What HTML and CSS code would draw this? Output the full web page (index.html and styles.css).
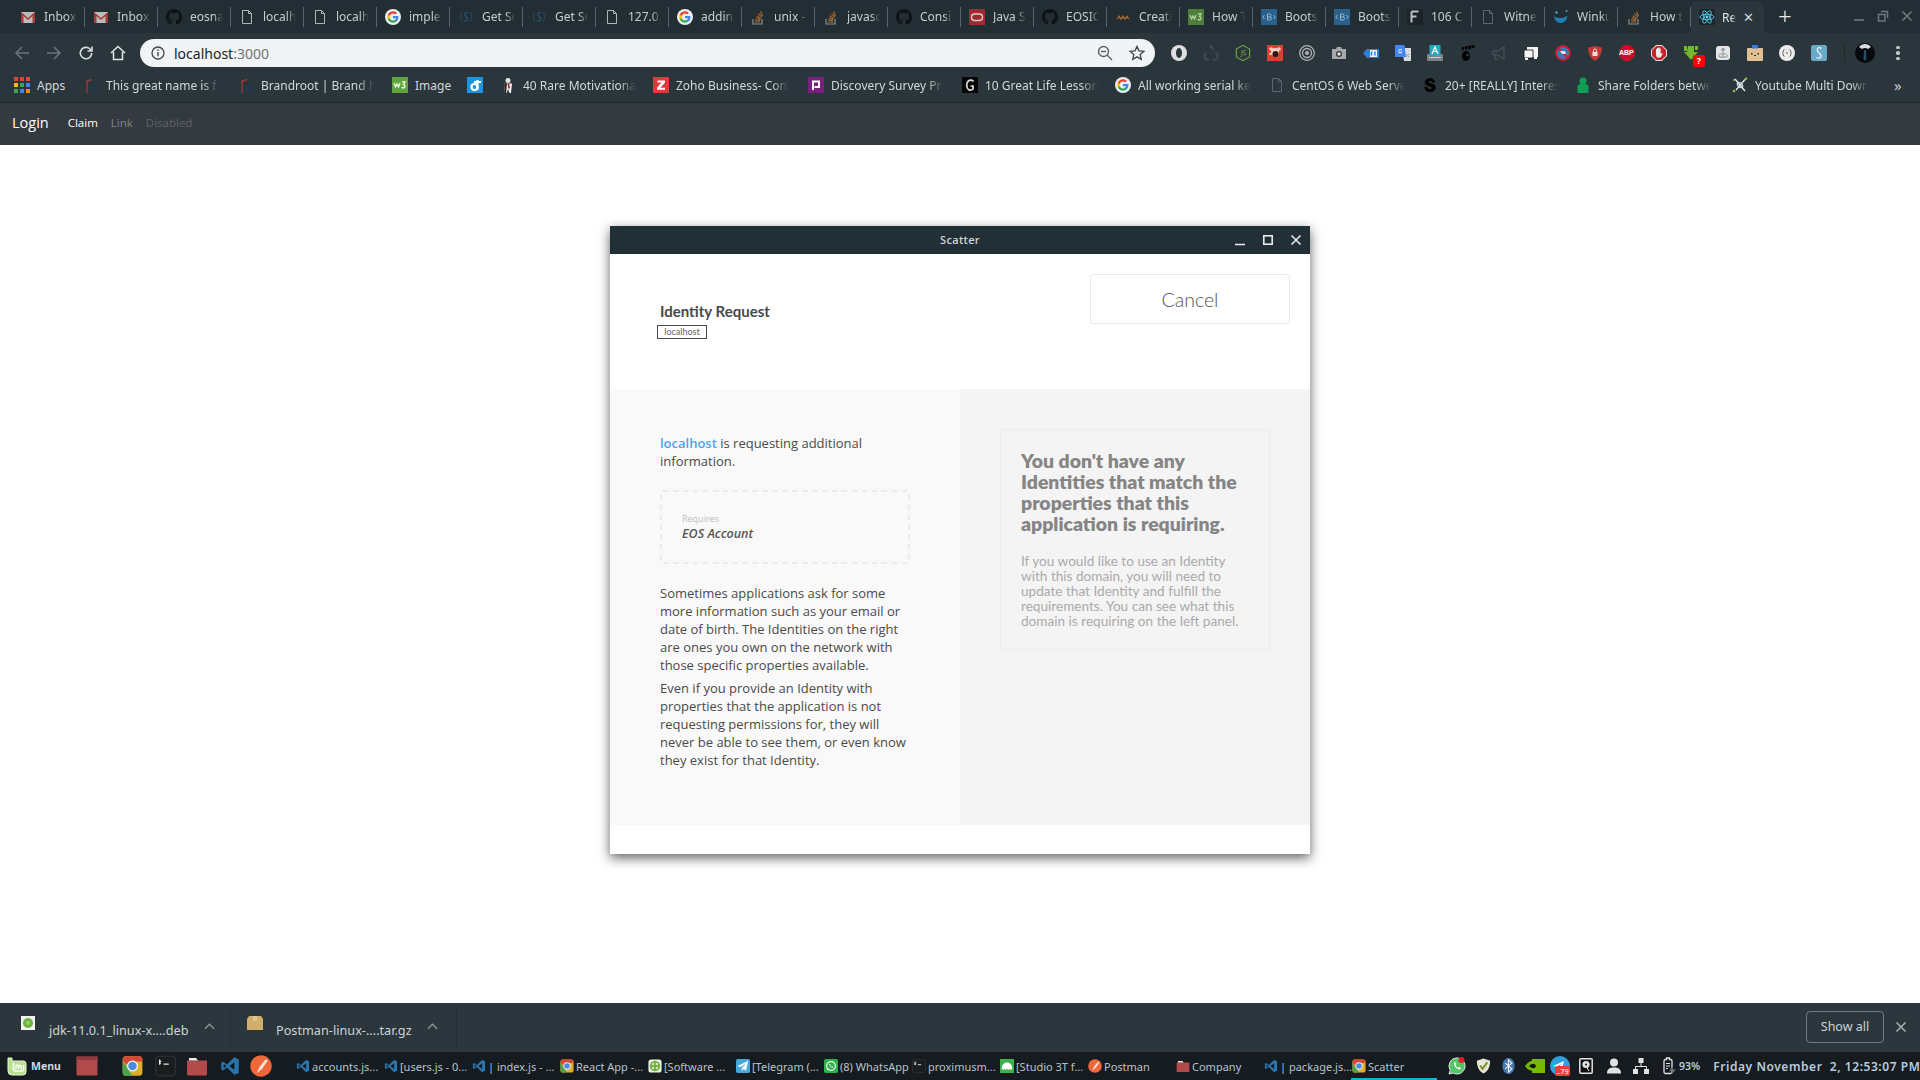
FILE: index.html
```
<!DOCTYPE html>
<html lang="en">
<head>
<meta charset="utf-8">
<title>React App</title>
<link rel="stylesheet" href="styles.css">
</head>
<body>
<svg class="defs" aria-hidden="true">
  <symbol id="gmail" viewBox="0 0 16 16"><rect x="1" y="3" width="14" height="11" fill="#b9bdbf"/><path d="M1 3l7 6 7-6v11h-2.500V7L8 11 3.500 7v7H1z" fill="#a63a34"/></symbol>
  <symbol id="github" viewBox="0 0 16 16"><path fill="#0e1316" d="M8 0C3.580 0 0 3.580 0 8c0 3.540 2.290 6.530 5.470 7.590.400.070.550-.170.550-.380 0-.190-.010-.820-.010-1.490-2.010.370-2.530-.490-2.690-.940-.090-.230-.480-.940-.820-1.130-.280-.150-.680-.520-.010-.530.630-.010 1.080.580 1.230.820.720 1.210 1.870.870 2.330.660.070-.520.280-.870.510-1.070-1.780-.200-3.640-.890-3.640-3.950 0-.870.310-1.590.820-2.150-.080-.200-.360-1.020.080-2.120 0 0 .670-.210 2.200.820.640-.180 1.320-.270 2-.270.680 0 1.360.090 2 .270 1.530-1.040 2.200-.820 2.200-.820.440 1.100.160 1.920.080 2.120.510.560.820 1.270.820 2.150 0 3.070-1.870 3.750-3.650 3.950.290.250.540.730.540 1.480 0 1.070-.010 1.930-.010 2.200 0 .210.150.460.550.380A8.013 8.013 0 0016 8c0-4.420-3.580-8-8-8z"/></symbol>
  <symbol id="page" viewBox="0 0 16 16"><path d="M3.500 1.500h6l3 3v10h-9z M9.500 1.500v3h3" fill="none" stroke="#aeb6ba" stroke-width="1"/></symbol>
  <symbol id="pagedim" viewBox="0 0 16 16"><path d="M3.500 1.500h6l3 3v10h-9z M9.500 1.500v3h3" fill="none" stroke="#5e696f" stroke-width="1"/></symbol>
  <symbol id="google" viewBox="0 0 24 24"><circle cx="12" cy="12" r="12" fill="#eceff0"/><g transform="translate(2.600 2.600) scale(.78)"><path fill="#4285F4" d="M22.560 12.250c0-.780-.070-1.530-.200-2.250H12v4.260h5.920c-.260 1.370-1.040 2.530-2.210 3.310v2.770h3.570c2.080-1.920 3.280-4.740 3.280-8.090z"/><path fill="#34A853" d="M12 23c2.970 0 5.460-.980 7.280-2.660l-3.570-2.770c-.980.660-2.230 1.060-3.710 1.060-2.860 0-5.290-1.930-6.160-4.530H2.180v2.840C3.990 20.530 7.700 23 12 23z"/><path fill="#FBBC05" d="M5.840 14.090c-.220-.660-.350-1.360-.350-2.090s.130-1.430.350-2.090V7.070H2.180C1.430 8.550 1 10.220 1 12s.430 3.450 1.180 4.930l3.660-2.840z"/><path fill="#EA4335" d="M12 5.380c1.620 0 3.060.560 4.210 1.640l3.150-3.150C17.450 2.090 14.970 1 12 1 7.700 1 3.990 3.470 2.180 7.070l3.660 2.840c.870-2.600 3.300-4.530 6.160-4.530z"/></g></symbol>
  <symbol id="scatter" viewBox="0 0 16 16"><path d="M10 4C8 2.500 6 4 7 6c1 2 3 2.500 2.500 4.800-.4 1.600-2.300 1.700-3.500.8" fill="none" stroke="#27526f" stroke-width="1.300"/><path d="M4 3C2 5 2 10 4 13M12 3c2 2 2 7 0 10" fill="none" stroke="#27526f" stroke-width=".8"/></symbol>
  <symbol id="so" viewBox="0 0 16 16"><path d="M3 10v5h9v-5" fill="none" stroke="#8b8f90" stroke-width="1.200"/><path d="M5 13h5M5 11l5 .6M5.600 9l4.800 1.400M6.600 6.800l4.300 2.600M8.400 4.600l3.500 3.600M10.500 2.500l2 4.500" stroke="#a8682d" stroke-width="1.200"/></symbol>
  <symbol id="oracle" viewBox="0 0 16 16"><rect width="16" height="16" fill="#9c2b32"/><rect x="2.500" y="5" width="11" height="6.500" rx="3.200" fill="none" stroke="#e7c9c9" stroke-width="1.400"/></symbol>
  <symbol id="creati" viewBox="0 0 16 16"><path d="M1 11l3-5 2 3 2-3 2 3 2-3 3 5-3-2-2 2-2-2-2 2-2-2z" fill="#a66a2c"/></symbol>
  <symbol id="w3" viewBox="0 0 16 16"><rect width="16" height="16" fill="#60a53e"/><path d="M2 6l1.500 4 1.500-3 1.500 3L8 6M10 5h3l-1.500 2.500c2 0 2 3.500-.2 3.500-.8 0-1.300-.3-1.600-.8" fill="none" stroke="#f2f8ee" stroke-width="1.300"/></symbol>
  <symbol id="w3dim" viewBox="0 0 16 16"><rect width="16" height="16" fill="#4d7f38"/><path d="M2 6l1.500 4 1.500-3 1.500 3L8 6M10 5h3l-1.500 2.500c2 0 2 3.500-.2 3.500-.8 0-1.300-.3-1.600-.8" fill="none" stroke="#b9d0ac" stroke-width="1.300"/></symbol>
  <symbol id="boot" viewBox="0 0 16 16"><rect width="16" height="16" fill="#2a618c"/><path d="M3.500 6L1.800 8l1.700 2M12.500 6l1.700 2-1.700 2M6.500 5v6M6.500 5H9c1.500 0 1.500 3 0 3H6.500m2.500 0c2 0 2 3 0 3H6.500" fill="none" stroke="#93b6d0" stroke-width="1"/></symbol>
  <symbol id="ff" viewBox="0 0 16 16"><rect width="16" height="16" fill="#1d2428"/><path d="M4.500 2.500h7M4.500 2.500v11M4.500 7.500h5" fill="none" stroke="#b9c0c4" stroke-width="2"/></symbol>
  <symbol id="winku" viewBox="0 0 16 16"><path d="M1 7c1 1 1 1 2.500 1.500 3 1 7 1 11-2-.5 5-3.500 7.500-7 7.500S1.500 11 1 7z" fill="#1f7fb4"/><circle cx="3.500" cy="3.500" r="1.200" fill="#4aa6d8"/><circle cx="13.500" cy="2" r="1" fill="#4aa6d8"/></symbol>
  <symbol id="react" viewBox="0 0 16 16"><rect width="16" height="16" rx="2" fill="#1c2529"/><g fill="none" stroke="#61dafb" stroke-width=".8"><ellipse cx="8" cy="8" rx="7" ry="2.700"/><ellipse cx="8" cy="8" rx="7" ry="2.700" transform="rotate(60 8 8)"/><ellipse cx="8" cy="8" rx="7" ry="2.700" transform="rotate(120 8 8)"/></g><circle cx="8" cy="8" r="1.400" fill="#61dafb"/></symbol>
  <symbol id="appsgrid" viewBox="0 0 16 16"><g fill="#ea4335"><rect x="0" y="0" width="4" height="4"/><rect x="6" y="0" width="4" height="4"/><rect x="12" y="0" width="4" height="4"/></g><g fill="#fbbc05"><rect x="0" y="6" width="4" height="4"/></g><g fill="#34a853"><rect x="6" y="6" width="4" height="4"/></g><g fill="#4285f4"><rect x="12" y="6" width="4" height="4"/></g><g fill="#34a853"><rect x="0" y="12" width="4" height="4"/></g><g fill="#4285f4"><rect x="6" y="12" width="4" height="4"/></g><g fill="#fb8c00"><rect x="12" y="12" width="4" height="4"/></g></symbol>
  <symbol id="brand" viewBox="0 0 16 16"><path d="M4 3v13" stroke="#a63a3a" stroke-width="1.200"/><path d="M4 6c1-2.500 3-3.500 5-3" fill="none" stroke="#a63a3a" stroke-width="1.200"/><path d="M10 7v8" stroke="#1f3c55" stroke-width="1.200"/><circle cx="12" cy="12" r="2.500" fill="none" stroke="#1f3c55" stroke-width="1.200"/></symbol>
  <symbol id="dbm" viewBox="0 0 16 16"><rect width="16" height="16" fill="#1b95e0"/><circle cx="7.500" cy="10" r="3" fill="none" stroke="#fff" stroke-width="2.200"/><path d="M10.500 3v10M7 5h7" stroke="#fff" stroke-width="2.200"/></symbol>
  <symbol id="rare" viewBox="0 0 16 16"><rect width="16" height="16" fill="#2a353c"/><circle cx="8" cy="3.500" r="2.500" fill="#e4e4e4"/><path d="M4 6.500h8L11 16H9.500L8 12l-1.500 4H5z" fill="#f2f2f2"/><path d="M7.500 6.500h1.500L10 11l-1.500 1z" fill="#9b1f1f"/><path d="M4 6.500h3L6 16H5z" fill="#222"/></symbol>
  <symbol id="zoho" viewBox="0 0 16 16"><rect width="16" height="16" fill="#e8373a"/><path d="M4.500 3.500h7.500v2L7.500 10.800H12v2H4v-2l4.500-5.300h-4z" fill="#fff"/></symbol>
  <symbol id="disc" viewBox="0 0 16 16"><rect width="16" height="16" fill="#7b1f7e"/><path d="M5 13V4.500h6v5.500H6.500" fill="none" stroke="#fff" stroke-width="2"/></symbol>
  <symbol id="great" viewBox="0 0 16 16"><rect width="16" height="16" fill="#060606"/><path d="M11.500 4.500C10.500 3 8 2.500 6.300 4 4 6 4.300 11 6.500 12.500c1.500 1 3.500.5 4.500-.5V9H8.500" fill="none" stroke="#dcdcdc" stroke-width="1.700"/></symbol>
  <symbol id="sblack" viewBox="0 0 16 16"><path d="M12.800 5.300C12.500 3 10.500 1.500 8 1.500 5 1.500 3.200 3 3.200 5.200c0 5 7 2.800 7 5.800 0 1-1 1.500-2.300 1.500-1.600 0-2.700-.800-2.900-2.300H2.800c.2 3 2.300 4.500 5.200 4.500 3.300 0 5.300-1.600 5.300-4 0-5.200-7-3-7-5.700 0-.9.800-1.400 1.800-1.400 1.300 0 2.200.600 2.400 1.700z" fill="#000" stroke="#000" stroke-width=".6"/></symbol>
  <symbol id="share" viewBox="0 0 16 16"><circle cx="8" cy="4" r="3.500" fill="#0f9d58"/><path d="M2.500 16V9.500C2.500 8 4 7 5.500 7h5c1.500 0 3 1 3 2.500V16z" fill="#0f9d58"/></symbol>
  <symbol id="yt" viewBox="0 0 16 16"><path d="M3 2l10 12M13 2.500L4 13" stroke="#dfe7ea" stroke-width="1.400"/><ellipse cx="8" cy="8" rx="3.200" ry="2" fill="none" stroke="#dfe7ea" transform="rotate(45 8 8)"/><circle cx="14" cy="1.800" r="1.300" fill="#8bc34a"/><circle cx="2" cy="14" r="1.300" fill="#8bc34a"/><circle cx="2" cy="3" r="1" fill="#8bc34a"/></symbol>
  <symbol id="vscode" viewBox="0 0 16 16"><path d="M11.500 1L5.500 6.800 2.500 4.500 1 5.300v5.400l1.500.8 3-2.300 6 5.800 3.500-1.500V2.500z" fill="#2a74ae"/><path d="M11.500 5v6l-4-3z" fill="#10181d"/><path d="M3 6.300v3.400L5 8z" fill="#10181d"/></symbol>
  <symbol id="chrome" viewBox="0 0 16 16"><rect x=".5" y=".5" width="15" height="15" rx="2.500" fill="#ddb02c"/><path d="M3 .5h10A2.500 2.500 0 0115.500 3v1.500H8L3.500 7 .5 4V3A2.500 2.500 0 013 .5z" fill="#d4483a"/><path d="M.5 4L5 11l3 4.500H3A2.500 2.500 0 01.5 13z" fill="#4fa04f"/><circle cx="8" cy="8" r="4.200" fill="#f2f2f2"/><circle cx="8" cy="8" r="3.200" fill="#4a8bdc"/></symbol>
  <symbol id="terminal" viewBox="0 0 16 16"><rect x=".5" y=".5" width="15" height="15" rx="2.500" fill="#1a1c1e" stroke="#3b3f42" stroke-width=".6"/><path d="M3.500 3v4M3 4.500h1.800M3 6h1.500M6.500 6.500h4" stroke="#e9e9e9" stroke-width="1"/></symbol>
  <symbol id="postman" viewBox="0 0 16 16"><circle cx="8" cy="8" r="7.800" fill="#f0683a"/><path d="M11.500 3L7 8.500 5 13l3.800-3L13 4z" fill="#fbe7dd"/></symbol>
  <symbol id="redbox" viewBox="0 0 22 20"><rect x=".5" y=".5" width="21" height="19" rx="1" fill="#b24a4c"/><rect x=".5" y=".5" width="21" height="3.500" fill="#8d3a3c"/></symbol>
  <symbol id="folder" viewBox="0 0 22 20"><path d="M1 4.500h20v14a1 1 0 01-1 1H2a1 1 0 01-1-1z" fill="#b24a4c"/><path d="M3 2h7l2 2.500H3z" fill="#f1f1f1"/></symbol>
  <symbol id="mint" viewBox="0 0 20 20"><path d="M1 2h4v3h11.500A2.500 2.500 0 0119 7.500V16a3 3 0 01-3 3H5a4 4 0 01-4-4z" fill="#b9e08e" stroke="#e8f5da"/><path d="M6.500 7v6a2 2 0 002 2H15a1.500 1.500 0 001.500-1.500V9" fill="none" stroke="#fff" stroke-width="1.500"/><path d="M9 13V9.500M11.500 13V9.500M14 13V9.500M8.500 9.500h5.500" stroke="#fff" stroke-width="1.300" fill="none"/></symbol>
  <symbol id="softw" viewBox="0 0 16 16"><rect x=".5" y=".5" width="15" height="15" rx="3" fill="#eef0e6"/><circle cx="8" cy="8" r="6" fill="#76b33f"/><g fill="#eef0e6"><circle cx="5.800" cy="5.800" r="1.200"/><circle cx="10.200" cy="5.800" r="1.200"/><circle cx="5.800" cy="10.200" r="1.200"/><circle cx="10.200" cy="10.200" r="1.200"/></g></symbol>
  <symbol id="telegram" viewBox="0 0 16 16"><rect width="16" height="16" rx="2" fill="#45a8dc"/><path d="M14 2L1.500 8l3.500 1.500L11.500 5 6.500 10.500V14l2.200-2.500 2.800 2z" fill="#f2f9fc"/></symbol>
  <symbol id="whatsapp" viewBox="0 0 16 16"><rect width="16" height="16" rx="2" fill="#29b14c"/><circle cx="8" cy="8" r="5" fill="none" stroke="#fff" stroke-width="1.300"/><path d="M3 13l1.200-3 1.800 2z" fill="#fff"/><path d="M6 5.800c0 2.400 1.800 4.200 4.200 4.200.5-.9 0-1.300-1-1.600l-.7.500C7.800 8.500 7.500 8.200 7.100 7.500l.5-.7C7.300 5.800 6.900 5.300 6 5.800z" fill="#fff"/></symbol>
  <symbol id="studio" viewBox="0 0 16 16"><rect width="16" height="16" fill="#3bb34a"/><path d="M2 11C2 7 4.500 4 8 4s6 3 6 7l-1.500 1.500-1.500-1.500-1.500 1.500L8 11l-1.500 1.500L5 11l-1.500 1.500z" fill="#fff"/></symbol>
  <symbol id="ext-o" viewBox="0 0 16 16"><circle cx="8" cy="8" r="8" fill="#dedede"/><ellipse cx="8" cy="8" rx="3" ry="5" fill="#2a353c"/></symbol>
  <symbol id="ext-rec" viewBox="0 0 16 16"><path d="M6.500 2.500L8 1l2.500 3.500M13 7l2 4-2 3.500H10M6 14.500H2.500L1 11l2-3.500" fill="none" stroke="#3f4c54" stroke-width="1.800"/></symbol>
  <symbol id="ext-node" viewBox="0 0 16 16"><path d="M8 .3l6.600 3.800v7.800L8 15.700 1.400 11.900V4.100z" fill="none" stroke="#6da13f" stroke-width="1.200"/><path d="M7 5v5.500c0 1-1 1.300-1.800.8M11 6c-.6-1-3-1-3 .500S11 7.500 11 9s-2.500 1.500-3 .3" fill="none" stroke="#6da13f" stroke-width=".9"/></symbol>
  <symbol id="ext-bug" viewBox="0 0 16 16"><rect width="16" height="16" fill="#d8412f"/><circle cx="8" cy="7" r="4" fill="#f4cfc8"/><circle cx="4" cy="4" r="1.800" fill="#f4cfc8"/><circle cx="12" cy="4" r="1.800" fill="#f4cfc8"/><circle cx="8.500" cy="9" r="3" fill="#2b1714"/><circle cx="3.500" cy="9" r="1.300" fill="#f4cfc8"/></symbol>
  <symbol id="ext-ring" viewBox="0 0 16 16"><g fill="none" stroke="#b0b4b6"><circle cx="8" cy="8" r="7.300" stroke-width="1.300"/><circle cx="8" cy="8" r="4.500" stroke-width="1.300"/></g><circle cx="8" cy="8" r="2" fill="#b0b4b6"/></symbol>
  <symbol id="ext-cam" viewBox="0 0 16 16"><path d="M1 4h4l1-2h4l1 2h4v10H1z" fill="#a6a9ab"/><circle cx="8" cy="9" r="3" fill="#2a353c"/><circle cx="8" cy="9" r="1.700" fill="#e5e5e5"/></symbol>
  <symbol id="ext-tag" viewBox="0 0 16 16"><path d="M0 8l4-4h12v9H4z" fill="#2f7de0"/><rect x="7" y="5" width="7" height="7" fill="#e9f1fc"/><path d="M8.500 6.500v4M12 6.500v4" stroke="#2f7de0" stroke-width="1.400"/></symbol>
  <symbol id="ext-gt" viewBox="0 0 16 16"><path d="M7 3h9v13H9z" fill="#d9dde0"/><path d="M0 0h9.500l1.500 12H0z" fill="#4285f4"/><path d="M7 5.200c-.5-1-3.500-1-3.500 1.100s3 2.300 3.500.7H5.500" fill="none" stroke="#fff" stroke-width=".9"/><path d="M11 9l3 3M14 9l-3 3" stroke="#8b9499"/></symbol>
  <symbol id="ext-kb" viewBox="0 0 16 16"><rect x="0" y="9" width="16" height="7" rx="1" fill="#7b8185"/><rect x="2.500" y="0" width="11" height="11" fill="#22a8c2"/><path d="M5 9L8 2l3 7M6 6.500h4" fill="none" stroke="#fff" stroke-width="1.200"/><path d="M2 12.500h12" stroke="#cfd3d5"/></symbol>
  <symbol id="ext-gnome" viewBox="0 0 16 16"><ellipse cx="7" cy="11" rx="4" ry="5" fill="#000"/><ellipse cx="4" cy="3.500" rx="1.200" ry="1.800" fill="#000"/><ellipse cx="7.200" cy="2.800" rx="1.300" ry="2" fill="#000"/><ellipse cx="10.500" cy="2.500" rx="1.500" ry="2.200" fill="#000"/><ellipse cx="14" cy="1.500" rx="1.700" ry="1.500" fill="#000"/><circle cx="8.500" cy="10" r="1.500" fill="#2a353c"/></symbol>
  <symbol id="ext-mega" viewBox="0 0 16 16"><path d="M2 6h5l6-4v12L7 10H2zM4 10v4h2.500" fill="none" stroke="#454f55" stroke-width="1.300"/></symbol>
  <symbol id="ext-mon" viewBox="0 0 16 16"><path d="M4 2h11v10H4z" fill="#f4f4f4"/><path d="M1 5h9v8H1z" fill="#f4f4f4" stroke="#111" stroke-width=".8"/><rect x="2" y="13" width="3" height="2" fill="#f4f4f4"/><rect x="11" y="12" width="3" height="2" fill="#f4f4f4"/></symbol>
  <symbol id="ext-no" viewBox="0 0 16 16"><circle cx="8" cy="8" r="7" fill="#3c78b8" stroke="#d21c2c" stroke-width="1.800"/><path d="M3 3l10 10" stroke="#d21c2c" stroke-width="1.800"/><path d="M5 6h5l1 3H7z" fill="#dfe6ef"/></symbol>
  <symbol id="ext-shield" viewBox="0 0 16 16"><path d="M1 2.500L8 1l7 1.500c0 6-2.500 10.500-7 13.500C3.500 13 1 8.500 1 2.500z" fill="#c13a36"/><rect x="5.500" y="7" width="5" height="4" fill="#f5dede"/><path d="M6.500 7V5.500a1.500 1.500 0 013 0V7" fill="none" stroke="#f5dede"/></symbol>
  <symbol id="ext-abp" viewBox="0 0 16 16"><path d="M5 0h6l5 5v6l-5 5H5l-5-5V5z" fill="#c70d2c"/></symbol>
  <symbol id="ext-stop" viewBox="0 0 16 16"><path d="M5 0h6l5 5v6l-5 5H5l-5-5V5z" fill="#e3e3e3"/><path d="M5.300 1h5.400L15 5.300v5.400L10.700 15H5.300L1 10.700V5.300z" fill="#c9222b"/><path d="M5 7V4h1v3-4h1.200v4-4.500h1.300V7 3.500h1.200V9l1.300-1 .7.500-2 4H6L5 10z" fill="#ececec"/></symbol>
  <symbol id="ext-dl" viewBox="0 0 16 16"><path d="M1 1h3v5H1zM5 1h6v6h4l-7 8-7-8h3z" fill="#74b62e"/><path d="M12 1h3v4h-3z" fill="#74b62e"/></symbol>
  <symbol id="ext-anchor" viewBox="0 0 16 16"><rect x="1" y="1" width="14" height="14" rx="3" fill="#e4e6e7"/><circle cx="8" cy="4.500" r="1.800" fill="#9aa0a3"/><path d="M8 6v7M4 9h8M3.500 10c0 3 9 3 9 0" fill="none" stroke="#9aa0a3" stroke-width="1.200"/></symbol>
  <symbol id="ext-box" viewBox="0 0 16 16"><rect y="3" width="16" height="13" rx="1" fill="#e3bf94"/><rect x="5" y="0" width="6" height="3.500" fill="#2f7de0"/><g fill="#2a2a2a"><rect x="4" y="8" width="1.500" height="1.500"/><rect x="10.500" y="8" width="1.500" height="1.500"/><rect x="7" y="10" width="2" height="1"/></g></symbol>
  <symbol id="ext-json" viewBox="0 0 16 16"><circle cx="8" cy="8" r="8" fill="#ececec"/><path d="M5.500 4.500C4 4.500 4.500 7.500 3.500 8c1 .5.500 3.500 2 3.500M10.500 4.500c1.500 0 1 3 2 3.500-1 .5-.5 3.500-2 3.500M7 8h2" fill="none" stroke="#444" stroke-width=".8"/></symbol>
  <symbol id="ext-s" viewBox="0 0 16 16"><rect width="16" height="16" rx="2" fill="#68aac8"/><path d="M10.500 3.500C8 1.500 5.500 3.500 6.500 6c1 2 4 3 3.500 5.500-.5 2-3 2-4.500 1" fill="none" stroke="#eaf4f8" stroke-width="1.300"/></symbol>
  <symbol id="avatar" viewBox="0 0 20 20"><circle cx="10" cy="10" r="10" fill="#060a10"/><path d="M4 4c3-4 9-4 12 0l-3 2c-2-1.500-4-1.500-6 0z" fill="#d8dde2"/><path d="M9 7h2l.5 9-1.500 2-1.500-2z" fill="#2a4a66"/></symbol>
  <symbol id="tray-wa" viewBox="0 0 18 18"><path d="M9 1a8 8 0 00-6.800 12.200L1 17l4-1.100A8 8 0 109 1z" fill="#54c566" stroke="#e6e6e6"/><path d="M6 5.500c-1 3 3.500 7.800 6.500 6.800.8-1.200.3-1.800-1.200-2.300l-1 .8C9 10.300 8 9.300 7.500 8l.8-1C7.900 5.500 7.200 4.900 6 5.500z" fill="#fff"/><circle cx="13.500" cy="3" r="3" fill="#e51b23"/></symbol>
  <symbol id="tray-shield" viewBox="0 0 18 18"><path d="M9 1l7 2.500c0 7-2.500 11-7 13.500-4.500-2.500-7-6.500-7-13.500z" fill="#e9e5d8"/><path d="M5.500 8.500L8 12l5-7" fill="none" stroke="#6f8f2a" stroke-width="2"/></symbol>
  <symbol id="tray-bt" viewBox="0 0 18 18"><ellipse cx="9" cy="9" rx="6.500" ry="8.500" fill="#4a76b4"/><path d="M5.500 6l7 6-3.500 3.500V2.500L12.500 6l-7 6" fill="none" stroke="#eef2f8" stroke-width="1.200"/></symbol>
  <symbol id="tray-nv" viewBox="0 0 20 14"><rect x="7" y="0" width="13" height="14" fill="#76b900"/><path d="M0 7c4-6 11-7 13-4v8C9 13 3 12 0 7z" fill="#76b900"/><path d="M4 7c3-3 6-3 7 0-1 3-4 3-7 0z" fill="#10171b"/></symbol>
  <symbol id="tray-tg" viewBox="0 0 20 20"><circle cx="10" cy="10" r="10" fill="#2f9fdd"/><path d="M14 5L3 10l3 1 5-3-3 4 4 1z" fill="#f3fafd"/></symbol>
  <symbol id="tray-disk" viewBox="0 0 14 16"><rect x=".8" y=".8" width="12.400" height="14.400" rx="1" fill="#111" stroke="#dfe3e6" stroke-width="1.500"/><circle cx="7" cy="6.500" r="3.600" fill="#dfe3e6"/><circle cx="7" cy="6.500" r="1" fill="#111"/><path d="M7 8l3 5" stroke="#dfe3e6"/></symbol>
  <symbol id="tray-user" viewBox="0 0 14 16"><circle cx="7" cy="4.500" r="4" fill="#dfe3e6"/><path d="M0 15.500c0-5 3-6 7-6s7 1 7 6z" fill="#dfe3e6"/></symbol>
  <symbol id="tray-net" viewBox="0 0 16 16"><g fill="#dfe3e6"><rect x="5.500" y="0" width="5" height="5"/><rect x="0" y="11" width="5" height="5"/><rect x="11" y="11" width="5" height="5"/></g><path d="M8 5v3.500M2.500 11V8.500h11V11" fill="none" stroke="#dfe3e6"/></symbol>
  <symbol id="tray-bat" viewBox="0 0 16 18"><path d="M4.500 2.500h1V1h3v1.500h1a1.500 1.500 0 011.500 1.500v11a1.500 1.500 0 01-1.500 1.500h-5.500A1.500 1.500 0 013 15V4a1.500 1.500 0 011.500-1.500z" fill="none" stroke="#dfe3e6" stroke-width="1.300"/><path d="M5 6.500h4M5 9h4M5 11.500h2" stroke="#dfe3e6"/><path d="M12 9l-4 5h3l-1 4 5-5.500h-3z" fill="#6b7277"/></symbol>
  <symbol id="tray-snd" viewBox="0 0 18 16"><path d="M1 5h3l5-4v14l-5-4H1z" fill="#e0e3e5"/><path d="M11 4.500c1.500 2 1.500 5 0 7M13.500 2.500c2.500 3 2.500 8 0 11" fill="none" stroke="#e0e3e5" stroke-width="1.300"/></symbol>
</svg>

<div class="tabstrip">
  <div class="tab"><svg class="fav"><use href="#gmail"/></svg><span class="tabtext">Inbox</span></div>
  <div class="tab"><svg class="fav"><use href="#gmail"/></svg><span class="tabtext">Inbox</span></div>
  <div class="tab"><svg class="fav"><use href="#github"/></svg><span class="tabtext">eosna</span></div>
  <div class="tab"><svg class="fav"><use href="#page"/></svg><span class="tabtext">localh</span></div>
  <div class="tab"><svg class="fav"><use href="#page"/></svg><span class="tabtext">localh</span></div>
  <div class="tab"><svg class="fav"><use href="#google"/></svg><span class="tabtext">imple</span></div>
  <div class="tab"><svg class="fav"><use href="#scatter"/></svg><span class="tabtext">Get Sc</span></div>
  <div class="tab"><svg class="fav"><use href="#scatter"/></svg><span class="tabtext">Get Sc</span></div>
  <div class="tab"><svg class="fav"><use href="#page"/></svg><span class="tabtext">127.0.</span></div>
  <div class="tab"><svg class="fav"><use href="#google"/></svg><span class="tabtext">addin</span></div>
  <div class="tab"><svg class="fav"><use href="#so"/></svg><span class="tabtext">unix -</span></div>
  <div class="tab"><svg class="fav"><use href="#so"/></svg><span class="tabtext">javasc</span></div>
  <div class="tab"><svg class="fav"><use href="#github"/></svg><span class="tabtext">Consi</span></div>
  <div class="tab"><svg class="fav"><use href="#oracle"/></svg><span class="tabtext">Java S</span></div>
  <div class="tab"><svg class="fav"><use href="#github"/></svg><span class="tabtext">EOSIC</span></div>
  <div class="tab"><svg class="fav"><use href="#creati"/></svg><span class="tabtext">Creati</span></div>
  <div class="tab"><svg class="fav"><use href="#w3dim"/></svg><span class="tabtext">How T</span></div>
  <div class="tab"><svg class="fav"><use href="#boot"/></svg><span class="tabtext">Boots</span></div>
  <div class="tab"><svg class="fav"><use href="#boot"/></svg><span class="tabtext">Boots</span></div>
  <div class="tab"><svg class="fav"><use href="#ff"/></svg><span class="tabtext">106 C</span></div>
  <div class="tab"><svg class="fav"><use href="#pagedim"/></svg><span class="tabtext">Witne</span></div>
  <div class="tab"><svg class="fav"><use href="#winku"/></svg><span class="tabtext">Winku</span></div>
  <div class="tab"><svg class="fav"><use href="#so"/></svg><span class="tabtext">How t</span></div>
  <div class="tab tab-active"><svg class="fav"><use href="#react"/></svg><span class="tabtext tabtext-active">Re</span><span class="tabx">✕</span></div>
  <span class="newtab">+</span>
  <div class="wincontrols">
    <svg class="winbtn" viewBox="0 0 12 12"><path d="M1 10h10" stroke="#6e787e" stroke-width="1.600"/></svg>
    <svg class="winbtn" viewBox="0 0 12 12"><path d="M4 1.500h6.500V8M1.500 4.500H8V11H1.500z" fill="none" stroke="#6e787e" stroke-width="1.500"/></svg>
    <svg class="winbtn" viewBox="0 0 12 12"><path d="M1.500 1.500l9 9M10.500 1.500l-9 9" stroke="#6e787e" stroke-width="1.600"/></svg>
  </div>
</div>

<div class="toolbar">
  <svg class="navbtn" viewBox="0 0 16 16"><path d="M15 8H2M8 2L2 8l6 6" fill="none" stroke="#68747b" stroke-width="1.600"/></svg>
  <svg class="navbtn" viewBox="0 0 16 16"><path d="M1 8h13M8 2l6 6-6 6" fill="none" stroke="#68747b" stroke-width="1.600"/></svg>
  <svg class="navbtn" viewBox="0 0 16 16"><path d="M13.700 8a5.700 5.700 0 11-1.700-4L14 6M14 1.500V6H9.500" fill="none" stroke="#d9dde0" stroke-width="1.600"/></svg>
  <svg class="navbtn" viewBox="0 0 16 16"><path d="M1 8l7-6.500L15 8M3.500 7v7.500h9V7" fill="none" stroke="#e3e6e8" stroke-width="1.500"/></svg>
  <div class="omnibox">
    <svg class="omni-info" viewBox="0 0 14 14"><circle cx="7" cy="7" r="6" fill="none" stroke="#41484e" stroke-width="1.300"/><path d="M7 6v4.300M7 3.500v1.500" stroke="#41484e" stroke-width="1.400"/></svg>
    <span class="url">localhost<span class="port">:3000</span></span>
    <svg class="omni-zoom" viewBox="0 0 16 16"><circle cx="6.500" cy="6.500" r="5" fill="none" stroke="#5c6368" stroke-width="1.400"/><path d="M10 10l5 5M4 6.500h5" stroke="#5c6368" stroke-width="1.400"/></svg>
    <svg class="omni-star" viewBox="0 0 16 16"><path d="M8 1.500l2 4.400 4.800.5-3.600 3.200 1 4.700L8 11.900l-4.200 2.400 1-4.700L1.200 6.400 6 5.900z" fill="none" stroke="#41484e" stroke-width="1.400"/></svg>
  </div>
  <div class="extensions">
    <span class="ext"><svg class="exticon"><use href="#ext-o"/></svg></span>
    <span class="ext"><svg class="exticon"><use href="#ext-rec"/></svg></span>
    <span class="ext"><svg class="exticon"><use href="#ext-node"/></svg></span>
    <span class="ext"><svg class="exticon"><use href="#ext-bug"/></svg></span>
    <span class="ext"><svg class="exticon"><use href="#ext-ring"/></svg></span>
    <span class="ext"><svg class="exticon"><use href="#ext-cam"/></svg></span>
    <span class="ext"><svg class="exticon"><use href="#ext-tag"/></svg></span>
    <span class="ext"><svg class="exticon"><use href="#ext-gt"/></svg></span>
    <span class="ext"><svg class="exticon"><use href="#ext-kb"/></svg></span>
    <span class="ext"><svg class="exticon"><use href="#ext-gnome"/></svg></span>
    <span class="ext"><svg class="exticon"><use href="#ext-mega"/></svg></span>
    <span class="ext"><svg class="exticon"><use href="#ext-mon"/></svg></span>
    <span class="ext"><svg class="exticon"><use href="#ext-no"/></svg></span>
    <span class="ext"><svg class="exticon"><use href="#ext-shield"/></svg></span>
    <span class="ext ext-abp"><svg class="exticon"><use href="#ext-abp"/></svg><span class="abp">ABP</span></span>
    <span class="ext"><svg class="exticon"><use href="#ext-stop"/></svg></span>
    <span class="ext ext-abp"><svg class="exticon"><use href="#ext-dl"/></svg><span class="badge">?</span></span>
    <span class="ext"><svg class="exticon"><use href="#ext-anchor"/></svg></span>
    <span class="ext"><svg class="exticon"><use href="#ext-box"/></svg></span>
    <span class="ext"><svg class="exticon"><use href="#ext-json"/></svg></span>
    <span class="ext"><svg class="exticon"><use href="#ext-s"/></svg></span>
    <span class="toolsep"></span>
    <svg class="avatar"><use href="#avatar"/></svg>
    <span class="kebab"><i></i><i></i><i></i></span>
  </div>
</div>

<div class="bookmarks">
  <div class="bm bm-apps"><svg class="fav"><use href="#appsgrid"/></svg><span class="bmtext">Apps</span></div>
  <div class="bm bm-155"><svg class="fav"><use href="#brand"/></svg><span class="bmtext fade">This great name is f</span></div>
  <div class="bm"><svg class="fav"><use href="#brand"/></svg><span class="bmtext fade">Brandroot | Brand N</span></div>
  <div class="bm bm-img"><svg class="fav"><use href="#w3"/></svg><span class="bmtext">Image</span></div>
  <div class="bm bm-d"><svg class="fav"><use href="#dbm"/></svg></div>
  <div class="bm bm-153"><svg class="fav"><use href="#rare"/></svg><span class="bmtext fade">40 Rare Motivationa</span></div>
  <div class="bm bm-155"><svg class="fav"><use href="#zoho"/></svg><span class="bmtext fade">Zoho Business- Cont</span></div>
  <div class="bm"><svg class="fav"><use href="#disc"/></svg><span class="bmtext fade">Discovery Survey Pr</span></div>
  <div class="bm bm-153"><svg class="fav"><use href="#great"/></svg><span class="bmtext fade">10 Great Life Lesson</span></div>
  <div class="bm"><svg class="fav"><use href="#google"/></svg><span class="bmtext fade">All working serial ke</span></div>
  <div class="bm bm-153"><svg class="fav"><use href="#pagedim"/></svg><span class="bmtext fade">CentOS 6 Web Serve</span></div>
  <div class="bm bm-153"><svg class="fav"><use href="#sblack"/></svg><span class="bmtext fade">20+ [REALLY] Interes</span></div>
  <div class="bm bm-157"><svg class="fav"><use href="#share"/></svg><span class="bmtext fade">Share Folders betwe</span></div>
  <div class="bm bm-last"><svg class="fav"><use href="#yt"/></svg><span class="bmtext fade">Youtube Multi Downl</span></div>
  <span class="chev">»</span>
</div>

<nav class="appnav">
  <span class="brand">Login</span>
  <span class="navlink navlink-on">Claim</span>
  <span class="navlink">Link</span>
  <span class="navlink navlink-off">Disabled</span>
</nav>

<main class="page">
  <section class="window">
    <header class="titlebar">
      <span class="wintitle">Scatter</span>
      <div class="titlectl">
        <svg class="ctl" viewBox="0 0 12 12"><path d="M1 10.500h10" stroke="#e8eaeb" stroke-width="1.500"/></svg>
        <svg class="ctl" viewBox="0 0 12 12"><rect x="1.800" y="1.800" width="8.400" height="8.400" fill="none" stroke="#e8eaeb" stroke-width="1.600"/></svg>
        <svg class="ctl" viewBox="0 0 12 12"><path d="M1.500 1.500l9 9M10.500 1.500l-9 9" stroke="#e8eaeb" stroke-width="1.600"/></svg>
      </div>
    </header>
    <div class="winhead">
      <div class="headtext">
        <h1 class="reqtitle">Identity Request</h1>
        <span class="domain">localhost</span>
      </div>
      <button class="cancel">Cancel</button>
    </div>
    <div class="panels">
      <div class="panel-left">
        <p class="lead"><span class="dom-link">localhost</span> is requesting additional information.</p>
        <div class="requires">
          <span class="req-label">Requires</span>
          <span class="req-value">EOS Account</span>
        </div>
        <p class="copy">Sometimes applications ask for some more information such as your email or date of birth. The Identities on the right are ones you own on the network with those specific properties available.</p>
        <p class="copy copy-2">Even if you provide an Identity with properties that the application is not requesting permissions for, they will never be able to see them, or even know they exist for that Identity.</p>
      </div>
      <div class="panel-right">
        <div class="nomatch">
          <h2 class="nomatch-title">You don't have any<br>Identities that match the<br>properties that this<br>application is requiring.</h2>
          <p class="nomatch-text">If you would like to use an Identity<br>with this domain, you will need to<br>update that Identity and fulfill the<br>requirements. You can see what this<br>domain is requiring on the left panel.</p>
        </div>
      </div>
    </div>
    <div class="winfoot"></div>
  </section>
</main>

<div class="downloads">
  <div class="dl dl-1"><svg class="dlicon" viewBox="0 0 14 14"><rect width="14" height="14" fill="#f2f2f2"/><circle cx="7" cy="7" r="5" fill="#6db33f"/><circle cx="7" cy="7" r="2" fill="#9ccc6f"/></svg><span class="dlname">jdk-11.0.1_linux-x....deb</span><svg class="caret" viewBox="0 0 12 8"><path d="M1 7l5-5 5 5" fill="none" stroke="#8b959a" stroke-width="1.500"/></svg></div>
  <div class="dl dl-2"><svg class="dlicon dlicon-box" viewBox="0 0 16 14"><path d="M2 0h12l2 3v11H0V3z" fill="#cfae6e"/><rect x="6" y="0" width="4" height="5" fill="#e2c88f"/></svg><span class="dlname">Postman-linux-....tar.gz</span><svg class="caret" viewBox="0 0 12 8"><path d="M1 7l5-5 5 5" fill="none" stroke="#8b959a" stroke-width="1.500"/></svg></div>
  <button class="showall">Show all</button>
  <svg class="dlclose" viewBox="0 0 12 12"><path d="M1.500 1.500l9 9M10.500 1.500l-9 9" stroke="#a5adb2" stroke-width="1.600"/></svg>
</div>

<footer class="taskbar">
  <div class="startmenu"><svg class="mint"><use href="#mint"/></svg><span class="menutext">Menu</span></div>
  <div class="launchers">
    <svg class="launch l-red"><use href="#redbox"/></svg>
    <svg class="launch l-chrome"><use href="#chrome"/></svg>
    <svg class="launch l-term"><use href="#terminal"/></svg>
    <svg class="launch l-folder"><use href="#folder"/></svg>
    <svg class="launch l-vs"><use href="#vscode"/></svg>
    <svg class="launch l-post"><use href="#postman"/></svg>
  </div>
  <div class="winlist">
    <div class="task"><svg class="taskicon"><use href="#vscode"/></svg><span class="tasktext">accounts.js...</span></div>
    <div class="task"><svg class="taskicon"><use href="#vscode"/></svg><span class="tasktext">[users.js - 0...</span></div>
    <div class="task"><svg class="taskicon"><use href="#vscode"/></svg><span class="tasktext">| index.js - ...</span></div>
    <div class="task"><svg class="taskicon"><use href="#chrome"/></svg><span class="tasktext">React App -...</span></div>
    <div class="task"><svg class="taskicon"><use href="#softw"/></svg><span class="tasktext">[Software ...</span></div>
    <div class="task"><svg class="taskicon"><use href="#telegram"/></svg><span class="tasktext">[Telegram (...</span></div>
    <div class="task"><svg class="taskicon"><use href="#whatsapp"/></svg><span class="tasktext">(8) WhatsApp</span></div>
    <div class="task"><svg class="taskicon"><use href="#terminal"/></svg><span class="tasktext">proximusm...</span></div>
    <div class="task"><svg class="taskicon"><use href="#studio"/></svg><span class="tasktext">[Studio 3T f...</span></div>
    <div class="task"><svg class="taskicon"><use href="#postman"/></svg><span class="tasktext">Postman</span></div>
    <div class="task"><svg class="taskicon"><use href="#folder"/></svg><span class="tasktext">Company</span></div>
    <div class="task"><svg class="taskicon"><use href="#vscode"/></svg><span class="tasktext">| package.js...</span></div>
    <div class="task task-active"><svg class="taskicon"><use href="#chrome"/></svg><span class="tasktext">Scatter</span></div>
  </div>
  <div class="tray">
    <svg class="trayicon t-wa"><use href="#tray-wa"/></svg>
    <svg class="trayicon t-sh"><use href="#tray-shield"/></svg>
    <svg class="trayicon t-bt"><use href="#tray-bt"/></svg>
    <svg class="trayicon t-nv"><use href="#tray-nv"/></svg>
    <span class="t-tg"><svg class="trayicon t-tgi"><use href="#tray-tg"/></svg><span class="tgbadge">..79</span></span>
    <svg class="trayicon t-disk"><use href="#tray-disk"/></svg>
    <svg class="trayicon t-user"><use href="#tray-user"/></svg>
    <svg class="trayicon t-net"><use href="#tray-net"/></svg>
    <svg class="trayicon t-bat"><use href="#tray-bat"/></svg>
    <span class="pct">93%</span>
    <span class="clock">Friday November&nbsp; 2, 12:53:07 PM</span>
    <svg class="trayicon t-snd"><use href="#tray-snd"/></svg>
  </div>
</footer>
</body>
</html>
```
FILE: styles.css
```
* { box-sizing: border-box; }
html, body { margin: 0; padding: 0; }
body {
  width: 1920px;
  height: 1080px;
  overflow: hidden;
  display: flex;
  flex-direction: column;
  background: #fff;
  font-family: "Noto Sans", sans-serif;
}
.defs { display: none; }

/* tab strip */
.tabstrip {
  height: 33px;
  flex: none;
  display: flex;
  align-items: flex-end;
  padding-left: 12px;
  background: #232e34;
  color: #c5cdd1;
  font-size: 12px;
}
.tab {
  width: 73px;
  height: 33px;
  display: flex;
  align-items: center;
  padding-left: 8px;
  gap: 8px;
  position: relative;
  flex: none;
}
.tab::after {
  content: "";
  position: absolute;
  right: 0;
  top: 7px;
  height: 20px;
  width: 1px;
  background: #59656c;
}
.tab-active {
  height: 32px;
  background: #2a353c;
  border-radius: 8px 8px 0 0;
  color: #e3e7e9;
  gap: 7px;
}
.tab-active::after { display: none; }
.fav { width: 16px; height: 16px; flex: none; }
.tabtext {
  width: 33px;
  overflow: hidden;
  white-space: nowrap;
  -webkit-mask-image: linear-gradient(to right, #000 72%, transparent);
  mask-image: linear-gradient(to right, #000 72%, transparent);
}
.tabtext-active { width: 14px; }
.tabx { font-size: 13px; line-height: 16px; color: #d5dadd; }
.newtab { margin: 0 0 1px 14px; font-size: 24px; line-height: 32px; color: #e7eaec; font-weight: 300; }
.wincontrols { display: flex; gap: 12px; margin-left: auto; padding: 0 7px 11px 0; }
.winbtn { width: 12px; height: 12px; }

/* toolbar */
.toolbar {
  height: 35px;
  flex: none;
  display: flex;
  align-items: center;
  background: #2a353c;
  padding: 5px 0 0 14px;
}
.navbtn { width: 16px; height: 16px; margin-right: 16px; flex: none; }
.omnibox {
  margin-left: -2px;
  width: 1015px;
  height: 28px;
  border-radius: 14px;
  background: #f1f3f4;
  display: flex;
  align-items: center;
  padding: 0 10px 0 11px;
  flex: none;
}
.omni-info { width: 14px; height: 14px; margin-right: 9px; }
.url { font-size: 14px; color: #202427; }
.port { color: #6f7579; }
.omni-zoom { width: 16px; height: 16px; margin-left: auto; margin-right: 16px; }
.omni-star { width: 16px; height: 16px; }
.extensions { display: flex; align-items: center; margin-left: 8px; flex: none; }
.ext {
  width: 32px;
  height: 28px;
  display: flex;
  align-items: center;
  justify-content: center;
  flex: none;
}
.ext-abp { position: relative; }
.exticon { width: 16px; height: 16px; }
.abp {
  position: absolute;
  left: 8px;
  top: 10px;
  font: 700 7px/8px "Liberation Sans", sans-serif;
  color: #fff;
}
.badge {
  position: absolute;
  left: 18px;
  top: 16px;
  width: 12px;
  height: 12px;
  border-radius: 2px;
  background: #f00;
  color: #fff;
  text-align: center;
  font: 700 9px/12px "Noto Sans", sans-serif;
}
.toolsep { width: 1px; height: 20px; background: #1f292e; margin: 0 10px 0 9px; }
.avatar { width: 20px; height: 20px; }
.kebab { display: flex; flex-direction: column; gap: 2px; margin-left: 21px; }
.kebab i { width: 3.500px; height: 3.500px; border-radius: 50%; background: #c4cace; display: block; }

/* bookmarks */
.bookmarks {
  height: 35px;
  flex: none;
  display: flex;
  align-items: center;
  padding-left: 14px;
  background: #2a353c;
  border-bottom: 1px solid #1e272c;
  color: #d2d8db;
  font-size: 12px;
  position: relative;
}
.bm { width: 154px; display: flex; align-items: center; gap: 7px; flex: none; }
.bm-apps { width: 69px; }
.bm-155 { width: 155px; }
.bm-153 { width: 153px; }
.bm-157 { width: 157px; }
.bm-img { width: 75px; }
.bm-d { width: 33px; }
.bm-last { width: 162px; }
.bmtext { white-space: nowrap; }
.bmtext.fade {
  width: 113px;
  overflow: hidden;
  -webkit-mask-image: linear-gradient(to right, #000 85%, transparent);
  mask-image: linear-gradient(to right, #000 85%, transparent);
}
.chev { font-size: 15px; color: #c8ced2; line-height: 18px; }

/* app nav */
.appnav {
  height: 42px;
  flex: none;
  display: flex;
  align-items: center;
  padding: 0 0 3px 12px;
  background: #343a40;
  font-family: "Open Sans", sans-serif;
}
.brand { font-size: 14.500px; color: #fff; margin-right: 19px; }
.navlink { font-size: 11.500px; color: #7f8387; margin-right: 13px; }
.navlink-on { color: #fff; }
.navlink-off { color: #5f6468; }

/* dialog */
.page {
  flex: 1;
  min-height: 0;
  display: flex;
  justify-content: center;
  padding-top: 81px;
  background: #fff;
}
.window {
  width: 700px;
  height: 628px;
  display: flex;
  flex-direction: column;
  background: #fff;
  box-shadow: 0 4px 11px rgba(0, 0, 0, .62);
  font-family: "Open Sans", sans-serif;
}
.titlebar {
  height: 28px;
  flex: none;
  background: #232f36;
  display: flex;
  align-items: center;
  justify-content: center;
  padding-bottom: 1px;
  position: relative;
}
.wintitle { font-size: 11px; font-weight: 600; color: #cfd4d7; letter-spacing: .3px; }
.titlectl { position: absolute; right: 8px; top: 8px; display: flex; gap: 16px; }
.ctl { width: 12px; height: 12px; }
.winhead {
  height: 135px;
  flex: none;
  display: flex;
  align-items: flex-start;
  justify-content: space-between;
  padding: 20px 20px 0 47px;
}
.headtext { padding-top: 28px; }
.reqtitle {
  margin: 0 0 4px 3px;
  font: 700 15px/19px Lato, sans-serif;
  color: #454a4e;
}
.domain {
  display: block;
  width: 50px;
  height: 14px;
  border: 1px solid #4a4a4a;
  font: 400 9px/12px Lato, sans-serif;
  color: #666;
  text-align: center;
}
.cancel {
  width: 200px;
  height: 50px;
  background: #fff;
  border: 1px solid #e8e8e8;
  border-radius: 3px;
  font: 300 19.500px Lato, sans-serif;
  color: #555;
}
.panels { flex: 1; min-height: 0; display: flex; }
.panel-left {
  width: 350px;
  flex: none;
  background: #f9f9f9;
  padding: 45px 0 0 50px;
}
.panel-right { flex: 1; background: #f4f4f4; padding: 40px 0 0 40px; }
.lead, .copy {
  margin: 0;
  width: 252px;
  font-size: 13px;
  line-height: 18px;
  color: #4a4a4a;
}
.dom-link { color: #4ea4f0; font-weight: 600; }
.requires {
  width: 250px;
  height: 74px;
  margin: 20px 0 20px;
  border: 2px dashed #ececec;
  border-radius: 3px;
  display: flex;
  flex-direction: column;
  padding: 20px 0 0 20px;
}
.req-label { font-size: 9px; line-height: 13px; color: #bdbdbd; }
.req-value { font-size: 12.500px; line-height: 17px; font-style: italic; font-weight: 600; color: #555; }
.copy-2 { margin-top: 5px; }
.nomatch {
  width: 270px;
  height: 221px;
  border: 1px solid #ececec;
  border-radius: 3px;
  padding: 20px 0 0 20px;
}
.nomatch-title {
  margin: 0 0 20px;
  font: 800 19.400px/21px Lato, sans-serif;
  color: #858585;
}
.nomatch-text {
  margin: 0;
  font: 400 13.600px/15px Lato, sans-serif;
  color: #aaa;
}
.winfoot { height: 29px; flex: none; background: #fff; }

/* downloads bar */
.downloads {
  height: 49px;
  flex: none;
  display: flex;
  align-items: center;
  background: #2b363d;
  color: #ccd3d7;
  font-size: 12.700px;
  position: relative;
}
.dl {
  height: 36px;
  display: flex;
  align-items: center;
  border-right: 1px solid #232d33;
  flex: none;
}
.dl-1 { width: 231px; padding-left: 21px; }
.dl-2 { width: 226px; padding-left: 16px; }
.dlicon { width: 14px; height: 14px; margin: -10px 14px 0 0; }
.dlicon-box { width: 16px; margin-right: 13px; }
.dlname { padding-top: 5px; white-space: nowrap; }
.caret { width: 11px; height: 8px; margin: 0 0 4px 15px; }
.showall {
  margin-left: auto;
  margin-right: 36px;
  width: 78px;
  height: 32px;
  margin-top: -2px;
  background: transparent;
  border: 1px solid #6e7b83;
  border-radius: 4px;
  color: #ccd3d7;
  font: 400 12.500px "Noto Sans", sans-serif;
}
.dlclose { position: absolute; right: 13px; top: 18px; width: 12px; height: 12px; }

/* taskbar */
.taskbar {
  height: 28px;
  flex: none;
  display: flex;
  align-items: center;
  background: #161b20;
  color: #b7c3cc;
  font-size: 11px;
}
.startmenu { width: 76px; display: flex; align-items: center; padding-left: 7px; gap: 4px; flex: none; }
.mint { width: 20px; height: 20px; }
.menutext { font-weight: 700; font-size: 10.500px; color: #cfd9e2; }
.launchers { width: 219px; display: flex; align-items: center; flex: none; }
.launch { height: 22px; flex: none; }
.l-red { width: 22px; margin-right: 24px; }
.l-chrome { width: 21px; margin-right: 12px; }
.l-term { width: 21px; margin-right: 10px; }
.l-folder { width: 22px; margin-right: 12px; }
.l-vs { width: 20px; margin-right: 10px; }
.l-post { width: 22px; }
.winlist { display: flex; flex: none; align-items: stretch; height: 28px; }
.task {
  width: 88px;
  display: flex;
  align-items: center;
  gap: 2px;
  padding-left: 1px;
  white-space: nowrap;
  flex: none;
}
.taskicon { width: 14px; height: 14px; flex: none; }
.task-active { width: 86px; box-shadow: inset 0 -2px 0 #12b3d4; }
.tray { flex: 1; display: flex; align-items: center; padding-left: 11px; }
.trayicon { flex: none; }
.t-wa { width: 18px; height: 18px; margin-right: 9px; }
.t-sh { width: 17px; height: 18px; margin-right: 8px; }
.t-bt { width: 17px; height: 18px; margin-right: 8px; }
.t-nv { width: 20px; height: 14px; margin-right: 5px; }
.t-tg { position: relative; width: 20px; height: 20px; margin-right: 9px; flex: none; }
.t-tgi { width: 20px; height: 20px; display: block; }
.tgbadge {
  position: absolute;
  left: 5px;
  top: 10px;
  width: 15px;
  height: 10px;
  background: #ef3b3b;
  border-radius: 2px;
  color: #fff;
  font: 400 7.500px/10px "Noto Sans", sans-serif;
  text-align: center;
}
.t-disk { width: 14px; height: 16px; margin-right: 14px; }
.t-user { width: 14px; height: 16px; margin-right: 12px; }
.t-net { width: 16px; height: 16px; margin-right: 12px; }
.t-bat { width: 16px; height: 18px; }
.pct { font-weight: 600; font-size: 10.500px; color: #b8cbdc; margin-left: 2px; }
.clock { font-weight: 600; font-size: 12px; color: #b8cbdc; margin-left: 13px; white-space: nowrap; letter-spacing: .56px; }
.t-snd { width: 17px; height: 16px; margin-left: 11px; }
```
